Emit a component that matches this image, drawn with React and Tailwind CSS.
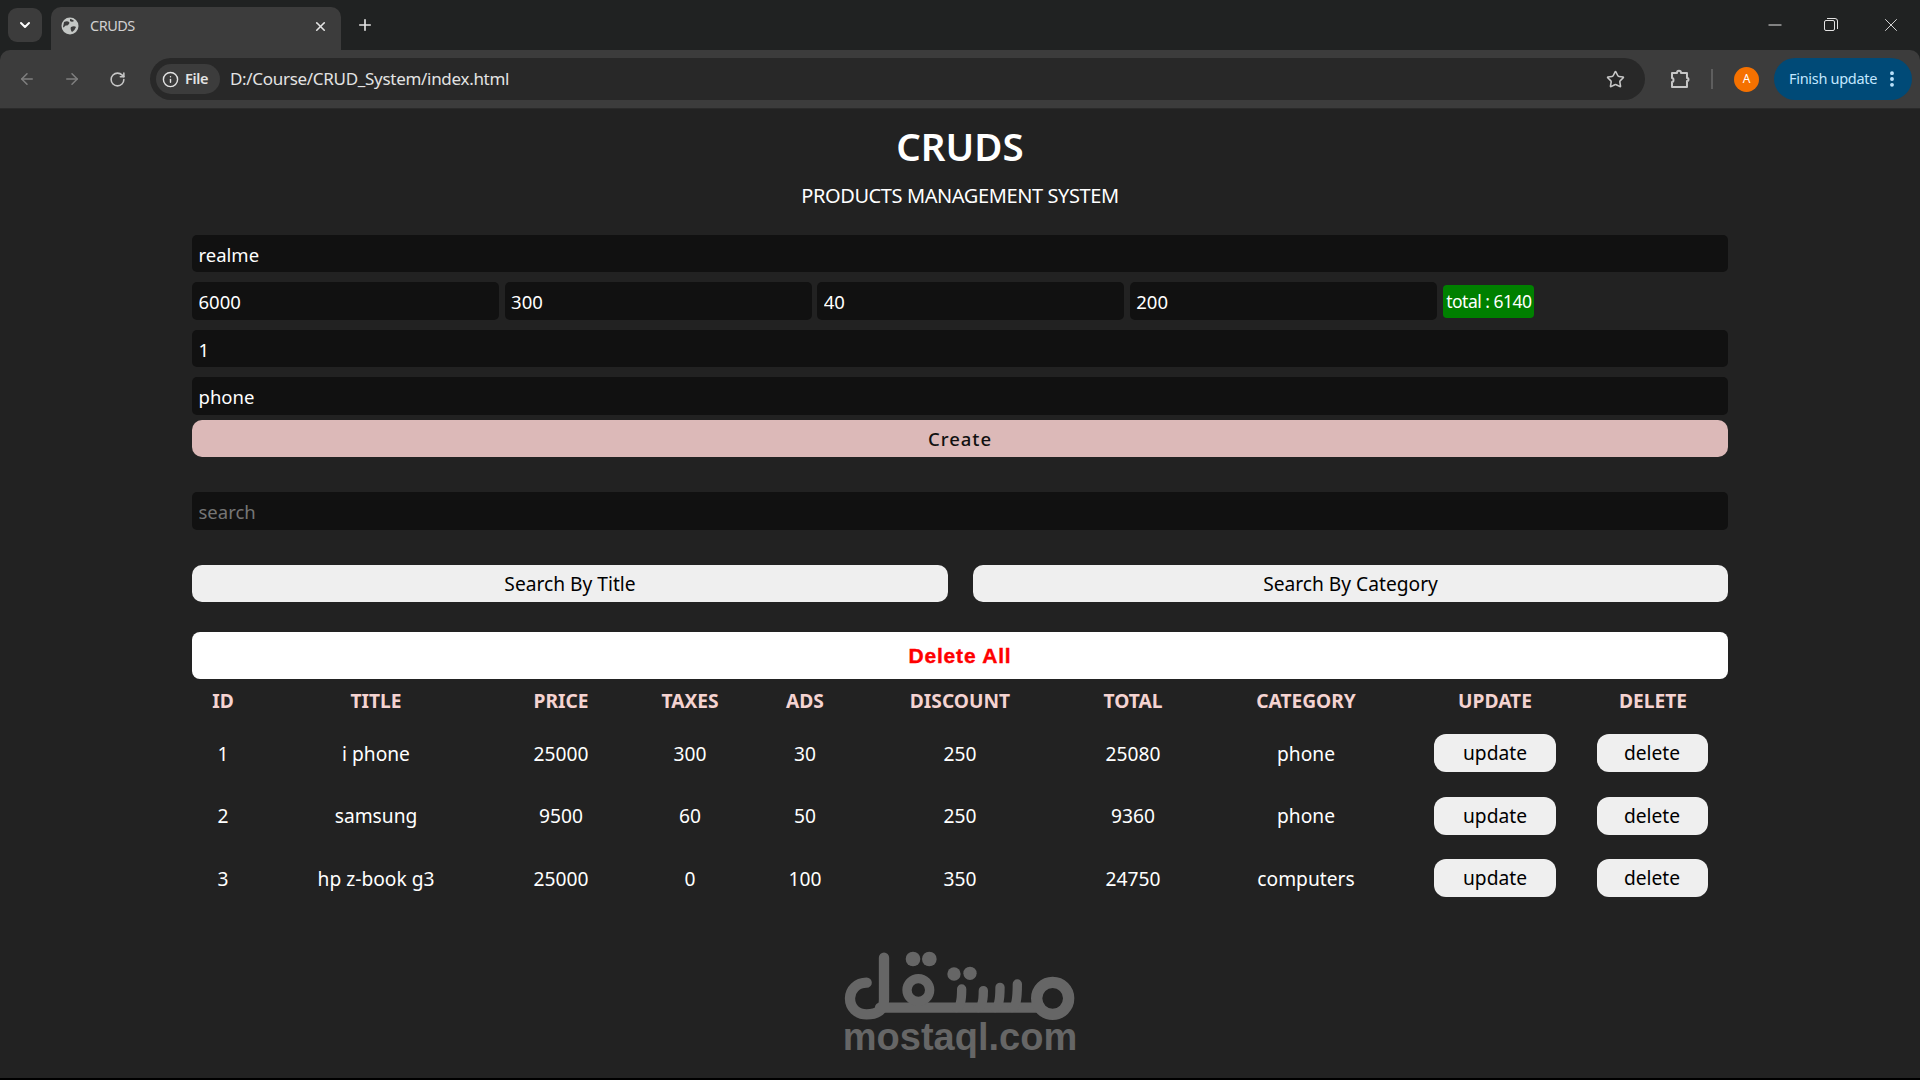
import React from "react";
import { ChevronDown, X, Plus, ArrowLeft, ArrowRight, RotateCw, Info, Star, EllipsisVertical } from "lucide-react";

const font = "font-['Noto_Sans','Open_Sans',sans-serif]";
const rows = [
  ["1", "i phone", "25000", "300", "30", "250", "25080", "phone"],
  ["2", "samsung", "9500", "60", "50", "250", "9360", "phone"],
  ["3", "hp z-book g3", "25000", "0", "100", "350", "24750", "computers"],
];
const heads = ["ID", "TITLE", "PRICE", "TAXES", "ADS", "DISCOUNT", "TOTAL", "CATEGORY", "UPDATE", "DELETE"];

function Field({ value, placeholder, className = "w-full" }) {
  return (
    <input
      readOnly
      value={value || ""}
      placeholder={placeholder}
      className={`${className} block bg-[#111111] text-white text-[18.5px] rounded-[5px] pl-[6.5px] pr-[7px] pt-[1px] outline-none placeholder:text-[#757575]`}
    />
  );
}

function Chrome() {
  return (
    <header className="h-[109px] bg-[#202222] text-[#c7c7c7] flex flex-col font-['Noto_Sans',sans-serif]">
      <div className="h-[50px] flex items-end">
        <div className="w-[34px] h-[34px] ml-[8px] mb-[8px] rounded-[9px] bg-[#3c3c3c] flex items-center justify-center">
          <ChevronDown size={16} strokeWidth={3} className="text-white" />
        </div>
        <div className="w-[290px] h-[43px] ml-[9px] bg-[#3c3c3c] rounded-t-[10px] flex items-center px-[10px] pb-[5px]">
          <svg width="18" height="18" viewBox="0 0 18 18" className="shrink-0">
            <circle cx="9" cy="9" r="8.5" fill="#c4c7c5" />
            <path d="M3 5c2-1 4-1 5 0s0 2-1 3-2 0-3 1-1 2-2 1zM10 10c2-1 4-1 5 0-1 2-2 4-4 5-1-1-2-4-1-5zM9 2c2 0 3 1 4 2-1 1-3 1-4 0z" fill="#3c3c3c" />
          </svg>
          <span className="ml-[11px] text-[14.5px] tracking-[-0.5px] text-[#d0d0d0] flex-1">CRUDS</span>
          <X size={15} strokeWidth={2.6} className="text-[#e3e3e3] mr-[3px]" />
        </div>
        <div className="ml-[14px] mb-[16px] w-[20px] flex justify-center"><Plus size={18} strokeWidth={2.2} className="text-[#e3e3e3]" /></div>
        <div className="flex-1" />
        <div className="flex items-center self-start mt-[14px] mr-[18px] gap-[42px] text-[#e3e3e3]">
          <svg width="14" height="20" viewBox="0 0 14 20"><path d="M0.5 10H13.5" stroke="currentColor" strokeWidth="1" /></svg>
          <svg width="14" height="20" viewBox="0 0 14 20" fill="none" stroke="currentColor" strokeWidth="1"><rect x="0.5" y="5.5" width="10" height="10" rx="1.5" /><path d="M3 3.5h8a2.5 2.5 0 0 1 2.5 2.5v8" /></svg>
          <X size={22} strokeWidth={1} />
        </div>
      </div>
      <div className="h-[58px] bg-[#3c3c3c] rounded-t-[10px] flex items-center pl-[18px] pr-[8px] border-b border-[#2a2a2a] box-content">
        <ArrowLeft size={18} strokeWidth={2} className="text-[#7f7f7f]" />
        <ArrowRight size={18} strokeWidth={2} className="text-[#7f7f7f] ml-[27px]" />
        <RotateCw size={17} strokeWidth={2.2} className="text-[#c7c7c7] ml-[28px]" />
        <div className="ml-[24px] h-[42px] w-[1496px] rounded-full bg-[#282828] flex items-center pl-[6px] pr-[20px]">
          <div className="h-[30px] w-[64px] rounded-full bg-[#3c3c3c] flex items-center pl-[6px] gap-[6px]">
            <Info size={17} strokeWidth={2} className="text-[#e3e3e3]" />
            <span className="text-[14.5px] font-semibold tracking-[-0.3px] text-[#e3e3e3]">File</span>
          </div>
          <span className="ml-[10px] text-[17px] tracking-[-0.3px] text-[#e3e3e3] flex-1">D:/Course/CRUD_System/index.html</span>
          <Star size={19} strokeWidth={2} className="text-[#c7c7c7]" />
        </div>
        <svg width="22" height="22" viewBox="0 0 22 22" fill="none" stroke="#c7c7c7" strokeWidth="2" strokeLinejoin="round" className="ml-[24px]">
          <path d="M3 5h5c0-3 4-3 4 0h6v5c2 0 2 3 0 3v6H3v-5c2 0 2-4 0-4z" />
        </svg>
        <div className="ml-[20px] w-[2px] h-[20px] bg-[#5e5e5e]" />
        <div className="ml-[21px] w-[25px] h-[25px] rounded-full bg-[#f57100] text-white text-[12px] flex items-center justify-center">A</div>
        <div className="ml-[15px] w-[138px] h-[42px] rounded-full bg-[#004a77] text-[#c2e7ff] flex items-center pl-[15px]">
          <span className="text-[14.5px] tracking-[-0.3px] whitespace-nowrap">Finish update</span>
          <EllipsisVertical size={20} strokeWidth={2.6} className="ml-[5px]" />
        </div>
      </div>
    </header>
  );
}

function Logo() {
  return (
    <div className="flex flex-col items-center mt-[35px]">
      <svg width="240" height="80" viewBox="0 0 720 240" fill="none" stroke="#666666" strokeWidth="31" strokeLinecap="round">
        <path d="M132 38V165Q132 208 80 208C50 208 30 188 30 160C30 135 50 113 80 113" />
        <path d="M120 188H600" />
        <circle cx="235" cy="135" r="34" strokeWidth="28" />
        <path d="M350 188Q365 188 365 132M415 188Q430 188 430 137M465 188Q480 188 480 127M517 188Q532 188 532 117" strokeWidth="28" />
        <circle cx="638" cy="160" r="48" strokeWidth="34" />
        <g fill="#666666" stroke="none">
          <circle cx="219" cy="42" r="22" />
          <circle cx="268" cy="42" r="22" />
          <circle cx="342" cy="87" r="20" />
          <circle cx="390" cy="85" r="20" />
        </g>
      </svg>
      <span className="mt-[-8px] font-['Liberation_Sans',sans-serif] font-bold text-[38px] leading-[40px] text-[#666666]">mostaql.com</span>
    </div>
  );
}

export default function App() {
  return (
    <div className={`${font} h-[1080px] bg-black overflow-hidden`}>
      <Chrome />
      <main className="h-[969px] bg-[#222222] text-white">
        <div className="w-[1536px] mx-auto">
          <div className="text-center pt-[9px]">
            <h1 className="text-[38.5px] leading-[56px] font-semibold">CRUDS</h1>
            <p className="text-[20px] leading-[28px] mt-[8px] tracking-[-0.4px]">PRODUCTS MANAGEMENT SYSTEM</p>
          </div>
          <div className="mt-[25px] flex flex-col">
            <Field value="realme" className="w-full h-[37px]" />
            <div className="flex items-center gap-[5.6px] mt-[10px]">
              <Field value="6000" className="w-[307px] h-[38px]" />
              <Field value="300" className="w-[307px] h-[38px]" />
              <Field value="40" className="w-[307px] h-[38px]" />
              <Field value="200" className="w-[307px] h-[38px]" />
              <div className="ml-[1px] w-[91px] h-[33px] pt-[1px] bg-[#008000] rounded-[4px] text-[17.5px] tracking-[-0.5px] flex items-center justify-center whitespace-nowrap">total : 6140</div>
            </div>
            <Field value="1" className="w-full h-[37px] mt-[10px]" />
            <Field value="phone" className="w-full h-[38px] mt-[10px]" />
            <button className="h-[37px] mt-[5px] rounded-[10px] bg-[#dcb9b8] text-[#111111] text-[18.5px] tracking-[1px] font-medium">Create</button>
            <Field placeholder="search" className="w-full h-[38px] mt-[35px]" />
            <div className="flex justify-between mt-[35px]">
              <button className="w-[756px] h-[37px] pt-[1px] rounded-[10px] bg-[#efefef] text-black text-[19.2px]">Search By Title</button>
              <button className="w-[755px] h-[37px] pt-[1px] rounded-[10px] bg-[#efefef] text-black text-[19.2px]">Search By Category</button>
            </div>
            <button className="h-[47px] pt-[1px] mt-[30px] rounded-[8px] bg-white text-[#ff0000] text-[21px] font-bold tracking-[0.8px] [-webkit-text-stroke:0.4px_#ff0000] font-['Liberation_Sans',sans-serif]">Delete All</button>
          </div>
          <table className="w-full table-fixed border-collapse text-[19.2px] text-center">
            <colgroup>
              <col className="w-[62px]" /><col className="w-[244px]" /><col className="w-[126px]" /><col className="w-[132px]" /><col className="w-[98px]" />
              <col className="w-[212px]" /><col className="w-[134px]" /><col className="w-[212px]" /><col className="w-[166px]" /><col />
            </colgroup>
            <thead>
              <tr className="h-[43px]">
                {heads.map((h) => <th key={h} className="pt-[1px] font-bold text-[#f5d3d1]">{h}</th>)}
              </tr>
            </thead>
            <tbody>
              {rows.map((r) => (
                <tr key={r[0]} className="h-[62.5px]">
                  {r.map((c, i) => <td key={i} className="pt-[2px]">{c}</td>)}
                  <td><button className="w-[122px] h-[38px] pt-[1px] rounded-[12px] bg-[#efefef] text-black text-[19.2px]">update</button></td>
                  <td className="pr-[2px]"><button className="w-[111px] h-[38px] pt-[1px] rounded-[12px] bg-[#efefef] text-black text-[19.2px]">delete</button></td>
                </tr>
              ))}
            </tbody>
          </table>
          <Logo />
        </div>
      </main>
    </div>
  );
}
